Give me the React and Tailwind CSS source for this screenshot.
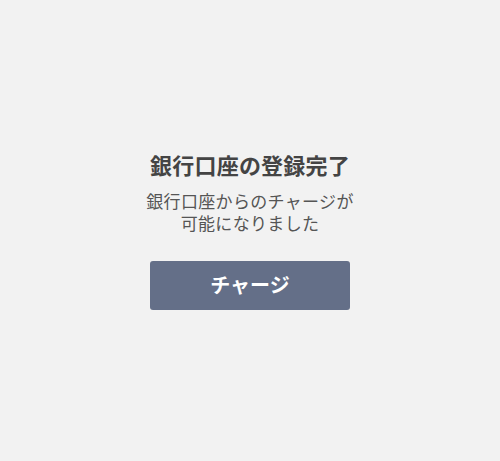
export default function App() {
  return (
    <div
      className="w-[500px] h-[461px] bg-[#f2f2f2] flex flex-col items-center justify-center"
      style={{ fontFamily: '"Noto Sans CJK JP", "Noto Sans", sans-serif' }}
    >
      <h1 className="text-[22px] leading-[28px] font-bold text-[#444444] tracking-[0.01em]">銀行口座の登録完了</h1>
      <div className="mt-[12px] text-[17px] leading-[22px] text-[#555555] text-center tracking-[0.02em]">
        <p>銀行口座からのチャージが</p>
        <p>可能になりました</p>
      </div>
      <button className="mt-[27px] mb-[2px] w-[200px] h-[49px] rounded-[3px] bg-[#646f88] text-white text-[20px] font-bold">
        チャージ
      </button>
    </div>
  );
}
